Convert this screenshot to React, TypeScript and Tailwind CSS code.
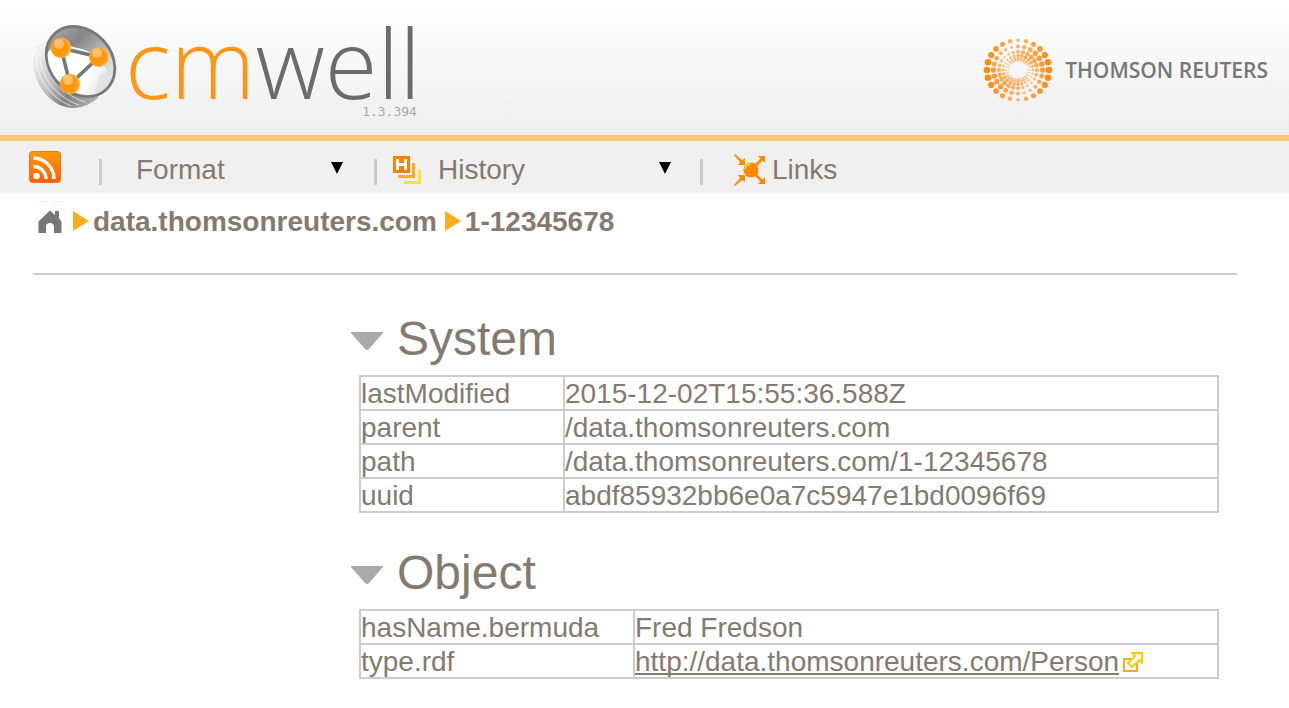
import { ReactNode, useState } from "react";

function WellLogo() {
  return (
    <svg className="h-[84px] w-[84px] shrink-0" viewBox="0 0 84 84" aria-hidden="true">
      <defs>
        <linearGradient id="side" x1="0" y1="0.3" x2="0.9" y2="1">
          <stop offset="0" stopColor="#f0f0f0" />
          <stop offset="0.4" stopColor="#bdbdbd" />
          <stop offset="0.65" stopColor="#808080" />
          <stop offset="1" stopColor="#b5b5b5" />
        </linearGradient>
        <linearGradient id="wall" x1="0" y1="0" x2="1" y2="0.8">
          <stop offset="0" stopColor="#b5b5b5" />
          <stop offset="0.45" stopColor="#868686" />
          <stop offset="1" stopColor="#e8e8e8" />
        </linearGradient>
        <linearGradient id="floor" x1="0.4" y1="0.3" x2="1" y2="0.7">
          <stop offset="0" stopColor="#ffffff" />
          <stop offset="0.6" stopColor="#fafafa" />
          <stop offset="1" stopColor="#d8d8d8" />
        </linearGradient>
        <radialGradient id="ball" cx="0.45" cy="0.5" r="0.6">
          <stop offset="0" stopColor="#ff9200" />
          <stop offset="0.65" stopColor="#ff9910" />
          <stop offset="1" stopColor="#ffc870" />
        </radialGradient>
        <clipPath id="rim">
          <ellipse cx="47.500" cy="37.500" rx="32" ry="39" transform="rotate(-42 47.500 37.500)" />
        </clipPath>
      </defs>
      <path d="M15 15C6 20 0 27 0 38C0 62 20 84 40 84C50 84 58 80 66 73L34 60Z" fill="url(#side)" />
      <g fill="none" stroke="#fff" strokeWidth="1" opacity=".7">
        <path d="M4 27C0 48 14 72 38 82" />
        <path d="M8 22C2 46 20 72 46 81" />
        <path d="M11 20C8 44 26 70 52 78" />
      </g>
      <g clipPath="url(#rim)">
        <rect width="84" height="84" fill="url(#floor)" />
        <path d="M8 28L20 4L50 -2L84 24V50L76 54C74 40 60 26 44 24C32 20 22 16 14 30Z" fill="url(#wall)" />
        <path d="M84 40L66 52L60 76L84 64Z" fill="#ddd" opacity=".6" />
      </g>
      <ellipse
        cx="47.500"
        cy="37.500"
        rx="31"
        ry="38"
        transform="rotate(-42 47.500 37.500)"
        fill="none"
        stroke="#787878"
        strokeWidth="2.800"
      />
      <path d="M28 24L66 33L37 60Z" fill="#fff" stroke="#777" strokeWidth="3.600" />
      <g fill="url(#ball)">
        <circle cx="28" cy="24" r="10.200" />
        <circle cx="66" cy="33" r="10" />
        <circle cx="37" cy="60" r="10.200" />
      </g>
      <g fill="#fff" opacity=".4">
        <circle cx="26" cy="20" r="5" />
        <circle cx="64" cy="29" r="5" />
        <circle cx="35" cy="56" r="5" />
      </g>
    </svg>
  );
}

const RINGS = [
  { radius: 31, size: 3.3, opacity: 1 },
  { radius: 24.5, size: 2.7, opacity: 0.85 },
  { radius: 19, size: 2.3, opacity: 0.75 },
  { radius: 15, size: 1.8, opacity: 0.7 },
  { radius: 12, size: 1.5, opacity: 0.6 },
  { radius: 9.8, size: 1.1, opacity: 0.5 },
];

function DotsLogo() {
  const dots: ReactNode[] = [];
  RINGS.forEach(({ radius, size, opacity }, i) => {
    for (let k = 0; k < 24; k++) {
      const angle = (k * Math.PI) / 12;
      const weight = Math.abs(Math.cos(angle + i * 0.35));
      dots.push(
        <circle
          key={`${i}-${k}`}
          cx={35 + Math.cos(angle) * radius}
          cy={35 + Math.sin(angle) * radius * 0.96}
          r={size * (0.55 + weight * 0.45)}
          opacity={opacity * (0.6 + weight * 0.4)}
        />,
      );
    }
  });
  return (
    <svg className="h-[70px] w-[70px] shrink-0" viewBox="0 0 70 70" fill="#ff8a10" aria-hidden="true">
      {dots}
    </svg>
  );
}

function RssIcon() {
  return (
    <svg className="block h-8 w-8" viewBox="0 0 32 32" aria-hidden="true">
      <defs>
        <linearGradient id="rss" x1="0" y1="0" x2="0" y2="1">
          <stop offset="0" stopColor="#ff9a0a" />
          <stop offset="1" stopColor="#ff5e00" />
        </linearGradient>
      </defs>
      <rect x=".5" y=".5" width="31" height="31" rx="3" fill="url(#rss)" stroke="#f07410" />
      <circle cx="7.500" cy="25" r="3.300" fill="#fff" />
      <path
        d="M4.500 15.500A12.500 12.500 0 0 1 17 28M4.500 7A21 21 0 0 1 25 28"
        fill="none"
        stroke="#fff"
        strokeWidth="3.400"
      />
    </svg>
  );
}

function HistoryIcon() {
  return (
    <svg className="block h-7 w-7 shrink-0" viewBox="0 0 28 28" fill="none" strokeWidth="3" aria-hidden="true">
      <path d="M0 0H17V17H0Z" fill="#ff7f00" />
      <path d="M4.500 3V14M12.500 3V14M4 8.500H13" stroke="#fff" />
      <path d="M20.500 7V20.500H5" stroke="#ffae1a" />
      <path d="M26.500 14V26.500H11" stroke="#ffdf33" />
    </svg>
  );
}

function LinksIcon() {
  return (
    <svg className="block h-8 w-8 shrink-0" viewBox="0 0 32 32" fill="#ff8800" aria-hidden="true">
      <path d="M1 0L8 6L11 4V11H4L6 8L0 1ZM1 32L8 26L11 28V21H4L6 24L0 31ZM31 2V9L28.500 6.500L21 14L19 12L26.500 4.500L24 2ZM31 30H24L26.500 27.500L19 20L21 18L28.500 25.500L31 23Z" />
      <circle cx="17" cy="16" r="7.500" />
      <path d="M11 15.500A6.500 6.500 0 0 1 17 10" fill="none" stroke="#ffd000" strokeWidth="2" />
    </svg>
  );
}

function HomeIcon() {
  return (
    <svg className="block h-6 w-6 overflow-visible" viewBox="0 0 24 24" fill="#777" aria-hidden="true">
      <path d="M1 -8H9V-7H1ZM15 -8H23V-7H15Z" fill="#e6e6e6" />
      <path d="M12 1.500L17 6V2H21V9.500L23.500 12.500V24H16V18A4 4 0 0 0 8 18V24H.5V12.500Z" />
    </svg>
  );
}

function ExternalIcon() {
  return (
    <svg className="block h-5 w-5" viewBox="0 0 20 20" fill="#fff" strokeWidth="2" aria-hidden="true">
      <path d="M1 7H14V19H1Z" stroke="#ffa91c" />
      <path d="M9.500 1H19V10.500L16.500 8L9 15L5 11L12 4Z" stroke="#ffcb00" />
    </svg>
  );
}

function Crumb({ children }: { children: string }) {
  return (
    <li className="flex items-center gap-1">
      <svg className="h-5 w-4" viewBox="0 0 16 20" fill="#ffae1a" aria-hidden="true">
        <path d="M0 0L16 10L0 20Z" />
      </svg>
      <a href="#" className="block pt-[2px] leading-[30px]">
        {children}
      </a>
    </li>
  );
}

function Menu({ label, className }: { label: string; className: string }) {
  return (
    <div className={`relative ${className}`}>
      <select aria-label={label} className="block h-8 w-full appearance-none bg-transparent leading-8">
        <option>{label}</option>
      </select>
      <svg className="pointer-events-none absolute top-2 right-0 h-3 w-3" viewBox="0 0 12 12" aria-hidden="true">
        <path d="M0 0H12L6 12Z" />
      </svg>
    </div>
  );
}

function Separator() {
  return <span className="mt-1 h-[26px] w-[3px] shrink-0 bg-[#ccc]" />;
}

function Section({ title, keyWidth, rows }: { title: string; keyWidth: string; rows: [string, ReactNode][] }) {
  const [open, setOpen] = useState(true);
  return (
    <section className="mb-8">
      <h2 className="-ml-2 pb-2 text-5xl leading-[56px]">
        <button
          type="button"
          aria-expanded={open}
          onClick={() => setOpen(!open)}
          className="flex items-center gap-[14px]"
        >
          <svg className="mt-1 h-[18px] w-8" viewBox="0 0 32 18" fill="#aaa" aria-hidden="true">
            <path d="M0 0H32V1L18 17Q16 19 14 17L0 1Z" />
          </svg>
          {title}
        </button>
      </h2>
      {open && (
        <table className="w-full table-fixed border-collapse leading-[30px]">
          <tbody>
            {rows.map(([name, value]) => (
              <tr key={name}>
                <th scope="row" className={`border-2 border-[#ccc] p-0 pt-[2px] text-left font-normal ${keyWidth}`}>
                  {name}
                </th>
                <td className="border-2 border-[#ccc] p-0 pt-[2px]">{value}</td>
              </tr>
            ))}
          </tbody>
        </table>
      )}
    </section>
  );
}

export default function App() {
  return (
    <div className="min-h-screen bg-white font-['Liberation_Sans',Arial,sans-serif] text-[28px] leading-8 text-[#857a70]">
      <header className="flex h-[141px] items-start justify-between border-b-6 border-[#ffc67c] bg-linear-to-b from-white to-[#eee] pr-[21px] pl-[33px]">
        <div className="flex items-start gap-2 pt-6">
          <WellLogo />
          <div className="flex flex-col items-end">
            <span className="font-['Open_Sans',sans-serif] text-[96px] leading-[76px] font-light text-[#6b6b6b]">
              <span className="text-[#ff9514]">cm</span>well
            </span>
            <span className="pt-1 pr-1 font-['DejaVu_Sans_Mono',monospace] text-[13px] leading-4 text-[#aaa]">
              1.3.394
            </span>
          </div>
        </div>
        <div className="flex items-center gap-3 pt-[35px]">
          <DotsLogo />
          <span className="font-['Open_Sans',sans-serif] text-[21px] font-semibold text-[#777]">THOMSON REUTERS</span>
        </div>
      </header>

      <nav className="flex h-[52px] items-start bg-[#f0f0f0] pt-[10px] pl-[29px]">
        <a href="#" aria-label="RSS feed">
          <RssIcon />
        </a>
        <div className="flex items-center pt-[3px] pl-[38px]">
          <Separator />
          <Menu label="Format" className="ml-[34px] w-[207px]" />
        </div>
        <div className="flex items-center pt-[3px] pl-[31px]">
          <Separator />
          <div className="ml-4 flex items-center gap-[17px]">
            <HistoryIcon />
            <Menu label="History" className="w-[233px]" />
          </div>
        </div>
        <div className="flex items-center pt-[3px] pl-[29px]">
          <Separator />
          <a href="#" className="ml-[31px] flex items-center gap-[6px]">
            <LinksIcon />
            Links
          </a>
        </div>
      </nav>

      <main className="pr-[52px] pl-[33px]">
        <ol className="flex items-center gap-2 border-b-2 border-[#ccc] pt-3 pb-9 pl-[5px] font-bold">
          <li className="mr-[3px]">
            <a href="#" aria-label="Home">
              <HomeIcon />
            </a>
          </li>
          <Crumb>data.thomsonreuters.com</Crumb>
          <Crumb>1-12345678</Crumb>
        </ol>

        <div className="pt-9 pr-[18px] pl-[326px]">
          <Section
            title="System"
            keyWidth="w-[204px]"
            rows={[
              ["lastModified", "2015-12-02T15:55:36.588Z"],
              ["parent", "/data.thomsonreuters.com"],
              ["path", "/data.thomsonreuters.com/1-12345678"],
              ["uuid", "abdf85932bb6e0a7c5947e1bd0096f69"],
            ]}
          />
          <Section
            title="Object"
            keyWidth="w-[274px]"
            rows={[
              ["hasName.bermuda", "Fred Fredson"],
              [
                "type.rdf",
                <span className="flex items-center gap-1">
                  <a href="#" className="underline [text-decoration-skip-ink:none]">
                    http://data.thomsonreuters.com/Person
                  </a>
                  <ExternalIcon />
                </span>,
              ],
            ]}
          />
        </div>
      </main>
    </div>
  );
}
